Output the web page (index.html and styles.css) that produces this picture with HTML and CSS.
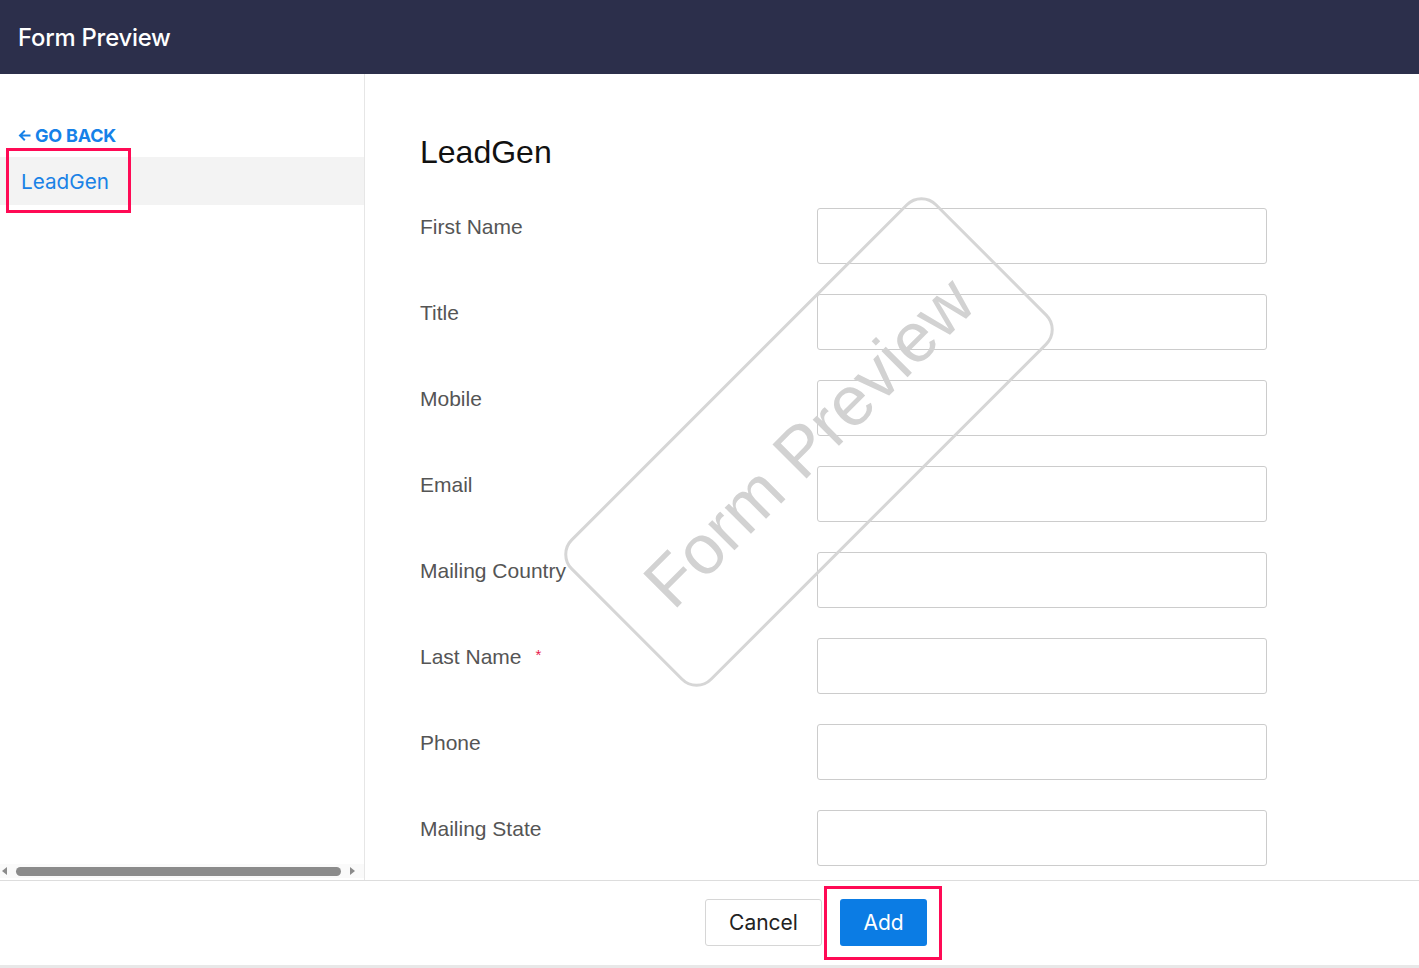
FILE: index.html
```html
<!DOCTYPE html>
<html lang="en">
<head>
    <meta charset="UTF-8">
    <meta name="viewport" content="width=device-width, initial-scale=1.0">
    <title>Form Preview</title>
    <link rel="stylesheet" href="styles.css">
</head>
<body>
    <header class="topbar">
        <h1>Form Preview</h1>
    </header>

    <div class="layout">
        <aside class="sidebar">
            <a class="go-back" href="#">
                <svg width="13" height="13" viewBox="0 0 13 13"><path d="M12.5 6.5H2M6.8 1.8L2 6.5l4.8 4.7" fill="none" stroke="currentColor" stroke-width="2"/></svg>
                GO BACK
            </a>
            <div class="layout-item">
                LeadGen
                <span class="highlight"></span>
            </div>
            <div class="hscroll">
                <span class="arrow left"></span>
                <span class="thumb"></span>
                <span class="arrow right"></span>
            </div>
        </aside>

        <main class="preview">
            <h2>LeadGen</h2>
            <div class="fields">
                <div class="field"><label>First Name</label><input type="text"></div>
                <div class="field"><label>Title</label><input type="text"></div>
                <div class="field"><label>Mobile</label><input type="text"></div>
                <div class="field"><label>Email</label><input type="text"></div>
                <div class="field"><label>Mailing Country</label><input type="text"></div>
                <div class="field"><label>Last Name <span class="req">*</span></label><input type="text"></div>
                <div class="field"><label>Phone</label><input type="text"></div>
                <div class="field"><label>Mailing State</label><input type="text"></div>
            </div>
            <!-- watermark over the form -->
            <div class="watermark"><span>Form Preview</span></div>
        </main>
    </div>

    <footer class="actions">
        <button class="btn cancel">Cancel</button>
        <button class="btn add">Add<span class="highlight"></span></button>
    </footer>
</body>
</html>
```

FILE: styles.css
```css
/* Form preview page */
body {
    margin: 0;
    font-family: "Liberation Sans", Arial, sans-serif;
    background: #fff;
    height: 968px;
    overflow: hidden;
}

.topbar {
    height: 74px;
    background: #2c2f4b;
    display: flex;
    align-items: center;
    padding-left: 18px;
}

.topbar h1 {
    margin: 0;
    color: #fff;
    font-family: Inter, "Noto Sans", sans-serif;
    font-size: 23.8px;
    font-weight: 500;
    letter-spacing: -0.2px;
}

.layout {
    display: flex;
    height: 806px;
}

/* left column */
.sidebar {
    width: 364px;
    border-right: 1px solid #e6e6e6;
    display: flex;
    flex-direction: column;
    padding-top: 51px;
    box-sizing: content-box;
}

.go-back {
    display: flex;
    align-items: center;
    gap: 4px;
    margin-left: 18px;
    height: 20px;
    color: #1681e8;
    text-decoration: none;
    font-family: Inter, "Noto Sans", sans-serif;
    font-weight: 700;
    font-size: 18px;
    letter-spacing: -0.2px;
}

.layout-item {
    position: relative;
    margin-top: 12px;
    height: 48px;
    background: #f3f3f3;
    color: #1a82e6;
    font-family: Inter, "Noto Sans", sans-serif;
    font-size: 20.7px;
    display: flex;
    align-items: center;
    padding-left: 21px;
}

.highlight {
    position: absolute;
    border: 3px solid #ff0a55;
    box-sizing: border-box;
    pointer-events: none;
}

.layout-item .highlight {
    left: 6px;
    top: -9px;
    width: 125px;
    height: 65px;
}

.hscroll {
    margin-top: auto;
    margin-bottom: 2px;
    height: 14px;
    background: #fafafa;
    display: flex;
    align-items: center;
    padding: 0 9px 0 2px;
    gap: 9px;
}

.hscroll .thumb {
    flex: 1;
    height: 9px;
    border-radius: 5px;
    background: #8b8b8b;
}

.hscroll .arrow {
    width: 0;
    height: 0;
    border-top: 4px solid transparent;
    border-bottom: 4px solid transparent;
}

.hscroll .arrow.left {
    border-right: 5px solid #8b8b8b;
}

.hscroll .arrow.right {
    border-left: 5px solid #8b8b8b;
}

/* form area */
.preview {
    position: relative;
    flex: 1;
    padding: 58px 0 0 55px;
    overflow: hidden;
}

.preview h2 {
    margin: 0 0 36px;
    font-size: 32px;
    font-weight: normal;
    line-height: 40px;
    color: #111;
}

.fields {
    display: flex;
    flex-direction: column;
    gap: 30px;
}

.field {
    display: flex;
    height: 56px;
}

.field label {
    width: 397px;
    font-size: 21px;
    line-height: 38px;
    color: #555;
}

.req {
    position: relative;
    top: -4px;
    color: #e8174b;
    font-size: 15px;
    margin-left: 8px;
}

.field input {
    width: 450px;
    height: 56px;
    box-sizing: border-box;
    border: 1px solid #cccccc;
    border-radius: 3px;
    margin: 0;
    background: transparent;
}

.watermark {
    position: absolute;
    left: 185px;
    top: 268px;
    width: 518px;
    height: 200px;
    box-sizing: border-box;
    border: 3px solid #d6d6d6;
    border-radius: 22px;
    transform: rotate(-45deg);
    display: flex;
    align-items: center;
    justify-content: center;
    pointer-events: none;
}

.watermark span {
    font-size: 70px;
    color: #d2d2d2;
    white-space: nowrap;
}

/* bottom buttons */
.actions {
    height: 66px;
    border-top: 1px solid #dddddd;
    border-bottom: 3px solid #e8e8e8;
    display: flex;
    align-items: flex-start;
    padding: 18px 0 0 705px;
    gap: 18px;
    box-sizing: content-box;
}

.btn {
    position: relative;
    height: 47px;
    font-family: Inter, "Noto Sans", sans-serif;
    font-size: 21px;
    border-radius: 3px;
    cursor: pointer;
}

.btn.cancel {
    width: 117px;
    background: #fff;
    color: #222;
    border: 1px solid #d6d6d6;
}

.btn.add {
    width: 87px;
    background: #0b7ce4;
    color: #fff;
    border: none;
}

.btn.add .highlight {
    left: -16px;
    top: -13px;
    width: 118px;
    height: 74px;
}
```
